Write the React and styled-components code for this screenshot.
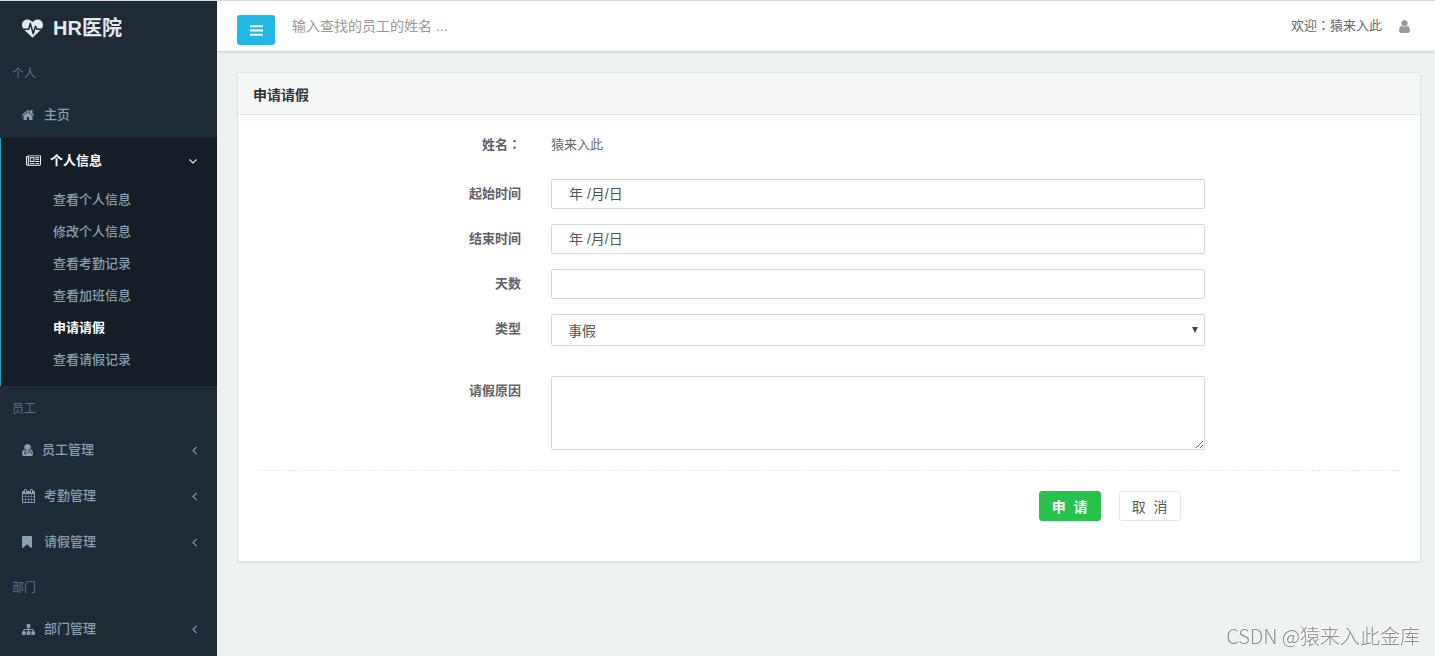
import { useState } from "react"
import styled, { createGlobalStyle, css } from "styled-components"

const GlobalStyle = createGlobalStyle`
    * {
        box-sizing: border-box;
    }
    body {
        margin: 0;
        background-color: #eef2f3;
        color: #686868;
        font-family: "Liberation Sans", "Noto Sans CJK SC", sans-serif;
        font-size: 13px;
        line-height: 20px;
    }
    input, select, textarea, button {
        font-family: inherit;
    }
`
const Layout = styled.div`
    display: flex;
    min-height: 100vh;
    border-top: 1px solid #d9dadd;
`
const Sidebar = styled.aside`
    flex: 0 0 217px;
    background-color: #1e2b35;
`
const Logo = styled.a`
    display: flex;
    align-items: center;
    gap: 10px;
    height: 50px;
    padding: 4px 22px 0;
    color: #e3e9f3;
    font-size: 20px;
    font-weight: 700;
    text-decoration: none;
`
const SectionTitle = styled.h5`
    height: 41px;
    margin: 0;
    padding: 13px 12px 0;
    color: #57748c;
    font-size: 12px;
    font-weight: 400;
`
const Menu = styled.ul`
    margin: 0;
    padding: 0;
    list-style: none;
`
const MenuItem = styled.li`
    ${({$open})=>$open&&css`
        padding-bottom: 10px;
        border-left: 1px solid #11a8cd;
        background-color: #151e26;
    `}
`
const MenuLink = styled.a`
    display: flex;
    align-items: center;
    height: 46px;
    padding: 0 20px 0 ${({$open})=>$open?'25px':'22px'};
    gap: 9px;
    color: ${({$open})=>$open?'#ffffff':'#87a0b4'};
    font-weight: ${({$open})=>$open?700:500};
    text-decoration: none;
    svg:last-child:not(:first-child) {
        margin-left: auto;
    }
`
const SubLink = styled.a`
    display: block;
    height: 32px;
    padding: 6px 0 6px 52px;
    color: ${({$active})=>$active?'#ffffff':'#87a0b4'};
    font-weight: ${({$active})=>$active?700:500};
    text-decoration: none;
`
const Page = styled.div`
    flex: 1;
    min-width: 0;
`
const TopBar = styled.header`
    display: flex;
    align-items: flex-start;
    height: 51px;
    padding: 14px 25px 0 20px;
    border-bottom: 1px solid #d0d2d3;
    background-color: #ffffff;
    box-shadow: 0 1px 2px rgba(0, 0, 0, 0.08);
`
const ToggleButton = styled.button`
    display: flex;
    align-items: center;
    justify-content: center;
    width: 38px;
    height: 30px;
    padding: 0;
    border: none;
    border-radius: 3px;
    background-color: #23b7e5;
    color: #ffffff;
    cursor: pointer;
`
const Search = styled.input`
    flex: 1;
    height: 22px;
    margin-left: 17px;
    padding: 0;
    border: none;
    outline: none;
    font-size: 14px;
    &::placeholder {
        color: #999999;
        opacity: 1;
    }
`
const Welcome = styled.div`
    display: flex;
    align-items: center;
    gap: 17px;
    height: 22px;
    svg {
        color: #999c9e;
    }
`
const Colon = styled.span`
    font-family: "Noto Sans CJK TC", sans-serif;
    line-height: 1;
`
const Panel = styled.section`
    margin: 20px 14px 0 20px;
    border: 1px solid #dee5e7;
    border-radius: 3px;
    background-color: #ffffff;
    box-shadow: 0 1px 2px rgba(0, 0, 0, 0.08);
`
const PanelTitle = styled.h1`
    margin: 0;
    padding: 12px 15px 9px;
    border-bottom: 1px solid #e3e9e9;
    background-color: #f6f8f8;
    color: #333333;
    font-size: 14px;
    font-weight: 700;
`
const Form = styled.form`
    padding: 20px 20px 40px;
`
const Row = styled.div`
    display: grid;
    grid-template-columns: 3fr 7fr 2fr;
    margin: 0 -15px ${({$gap})=>$gap??15}px;
`
const Label = styled.label`
    padding: 5px 15px 0 0;
    color: #606266;
    font-weight: 700;
    text-align: right;
`
const NameRow = styled(Row)`
    label {
        padding-top: 0;
    }
`
const Name = styled.output`
    padding: 0 15px;
`
const Field = styled.div`
    position: relative;
    padding: 0 15px;
`
const control = css`
    display: block;
    width: 100%;
    border: 1px solid #cfdadd;
    border-radius: 2px;
    outline: none;
    background-color: #ffffff;
    color: #555555;
    font-size: 14px;
`
const Input = styled.input`
    ${control}
    height: 30px;
    padding: 0 17px;
    &::placeholder {
        color: #555555;
        opacity: 1;
    }
`
const Select = styled.select`
    ${control}
    height: 32px;
    padding: 2px 16px 0;
    appearance: none;
`
const Caret = styled.svg`
    position: absolute;
    top: 13px;
    right: 22px;
    pointer-events: none;
`
const TextArea = styled.textarea`
    ${control}
    height: 74px;
    padding: 6px 16px;
    resize: vertical;
`
const Divider = styled.hr`
    margin: 20px 0;
    border: none;
    border-top: 1px dashed #e5e8e9;
`
const Actions = styled.div`
    display: flex;
    grid-column: 2;
    justify-content: flex-end;
    gap: 18px;
    padding-right: 39px;
`
const Button = styled.button`
    width: 62px;
    height: 30px;
    padding: 0;
    border: 1px solid ${({$primary})=>$primary?'#27c24c':'#e4e6e8'};
    border-radius: 3px;
    background-color: ${({$primary})=>$primary?'#27c24c':'#ffffff'};
    color: ${({$primary})=>$primary?'#ffffff':'#58595b'};
    font-size: 14px;
    font-weight: ${({$primary})=>$primary?700:400};
    white-space: pre;
    cursor: pointer;
`
const Watermark = styled.div`
    position: fixed;
    right: 15px;
    bottom: 5px;
    color: #8a8c8e;
    font-family: "Noto Sans CJK SC", sans-serif;
    font-size: 20px;
    font-weight: 300;
    line-height: 30px;
    text-shadow: -1px -1px 0 #ffffff;
    pointer-events: none;
`

const bar = "q0 26-19 45t-45 19h-1408q-26 0-45-19t-19-45v-128q0-26 19-45t45-19h1408q26 0 45 19t19 45z"
const icons = {
    heartbeat: {
        box: "0 0 1792 1792",
        width: 21,
        height: 21,
        d: "M1280 1024h305q-5 6-10 10.5t-9 7.5l-3 4-623 600q-18 18-44 18t-44-18l-624-602q-5-2-21-20h369q22 0 39.5-13.5t22.5-34.5l70-281 190 667q6 20 23 33t39 13q21 0 38-13t23-33l146-485 56 112q18 35 57 35zm512-428q0 145-103 300h-369l-111-221q-8-17-25.5-27t-36.5-8q-45 5-56 46l-129 430-196-686q-6-20-23.5-33t-39.5-13-39 13.5-22 34.5l-116 464h-423q-103-155-103-300 0-220 127-344t351-124q62 0 126.5 21.5t120 58 95.5 68.5 76 68q36-36 76-68t95.5-68.5 120-58 126.5-21.5q224 0 351 124t127 344z",
    },
    home: {
        box: "64 0 1664 1792",
        width: 13,
        height: 14,
        d: "M1408 992v480q0 26-19 45t-45 19h-384v-384h-256v384h-384q-26 0-45-19t-19-45v-480q0-1 .5-3t.5-3l575-474 575 474q1 2 1 6zm223-69l-62 74q-8 9-21 11h-3q-13 0-21-7l-692-577-692 577q-12 8-24 7-13-2-21-11l-62-74q-8-10-7-23.5t11-21.5l719-599q32-26 76-26t76 26l244 204v-195q0-14 9-23t23-9h192q14 0 23 9t9 23v408l219 182q10 8 11 21.5t-7 23.5z",
    },
    news: {
        box: "0 0 2048 1792",
        width: 15,
        height: 14,
        d: "M1024 512h-384v384h384v-384zm128 640v128h-640v-128h640zm0-768v640h-640v-640h640zm640 768v128h-512v-128h512zm0-256v128h-512v-128h512zm0-256v128h-512v-128h512zm0-256v128h-512v-128h512zm-1536 960v-960h-128v960q0 26 19 45t45 19 45-19 19-45zm1664 0v-1088h-1536v1088q0 33-11 64h1483q26 0 45-19t19-45zm128-1216v1216q0 80-56 136t-136 56h-1664q-80 0-136-56t-56-136v-1088h256v-128h1792z",
    },
    calendar: {
        box: "64 0 1664 1792",
        width: 13,
        height: 14,
        d: "M192 1664h288v-288h-288v288zm352 0h320v-288h-320v288zm-352-352h288v-320h-288v320zm352 0h320v-320h-320v320zm-352-384h288v-288h-288v288zm736 736h320v-288h-320v288zm-384-736h320v-288h-320v288zm768 736h288v-288h-288v288zm-384-352h320v-320h-320v320zm-352-864v-288q0-13-9.5-22.5t-22.5-9.5h-64q-13 0-22.5 9.5t-9.5 22.5v288q0 13 9.5 22.5t22.5 9.5h64q13 0 22.5-9.5t9.5-22.5zm736 864h288v-320h-288v320zm-384-384h320v-288h-320v288zm384 0h288v-288h-288v288zm32-480v-288q0-13-9.5-22.5t-22.5-9.5h-64q-13 0-22.5 9.5t-9.5 22.5v288q0 13 9.5 22.5t22.5 9.5h64q13 0 22.5-9.5t9.5-22.5zm384-64v1280q0 52-38 90t-90 38h-1408q-52 0-90-38t-38-90v-1280q0-52 38-90t90-38h128v-96q0-66 47-113t113-47h64q66 0 113 47t47 113v96h384v-96q0-66 47-113t113-47h64q66 0 113 47t47 113v96h128q52 0 90 38t38 90z",
    },
    bookmark: {
        box: "256 0 1664 1792",
        width: 13,
        height: 14,
        d: "M1420 128q23 0 44 9 33 13 52.5 41t19.5 62v1289q0 34-19.5 62t-52.5 41q-19 8-44 8-48 0-83-32l-441-424-441 424q-36 33-83 33-23 0-44-9-33-13-52.5-41t-19.5-62v-1289q0-34 19.5-62t52.5-41q21-9 44-9h1048z",
    },
    sitemap: {
        box: "0 0 1792 1792",
        width: 13,
        height: 13,
        d: "M1792 1248v320q0 40-28 68t-68 28h-320q-40 0-68-28t-28-68v-320q0-40 28-68t68-28h96v-192h-512v192h96q40 0 68 28t28 68v320q0 40-28 68t-68 28h-320q-40 0-68-28t-28-68v-320q0-40 28-68t68-28h96v-192h-512v192h96q40 0 68 28t28 68v320q0 40-28 68t-68 28h-320q-40 0-68-28t-28-68v-320q0-40 28-68t68-28h96v-192q0-52 38-90t90-38h512v-192h-96q-40 0-68-28t-28-68v-320q0-40 28-68t68-28h320q40 0 68 28t28 68v320q0 40-28 68t-68 28h-96v192h512q52 0 90 38t38 90v192h96q40 0 68 28t28 68z",
    },
    user: {
        box: "256 0 1280 1792",
        width: 11,
        height: 15,
        d: "M1536 1399q0 109-62.5 187t-150.5 78h-854q-88 0-150.5-78t-62.5-187q0-85 8.5-160.5t31.5-152 58.5-131 94-89 134.5-34.5q131 128 313 128t313-128q76 0 134.5 34.5t94 89 58.5 131 31.5 152 8.5 160.5zm-256-887q0 159-112.5 271.5t-271.5 112.5-271.5-112.5-112.5-271.5 112.5-271.5 271.5-112.5 271.5 112.5 112.5 271.5z",
    },
    bars: {
        box: "0 0 1792 1792",
        width: 15,
        height: 15,
        d: `M1664 1344v128${bar}M1664 832v128${bar}M1664 320v128${bar}`,
    },
    left: {
        box: "576 0 640 1792",
        width: 5,
        height: 14,
        d: "M1203 544q0 13-10 23l-393 393 393 393q10 10 10 23t-10 23l-50 50q-10 10-23 10t-23-10l-466-466q-10-10-10-23t10-23l466-466q10-10 23-10t23 10l50 50q10 10 10 23z",
    },
    down: {
        box: "384 0 1024 1792",
        width: 8,
        height: 14,
        d: "M1395 736q0 13-10 23l-466 466q-10 10-23 10t-23-10l-466-466q-10-10-10-23t10-23l50-50q10-10 23-10t23 10l393 393 393-393q10-10 23-10t23 10l50 50q10 10 10 23z",
    },
}

const Icon = ({name})=>{
    const {box,width,height,d} = icons[name]
    return(
        <svg width={width} height={height} viewBox={box} fill="currentColor" aria-hidden="true">
            <path d={d}/>
        </svg>
    )
}
// a person with a stethoscope hanging over the coat
const DoctorIcon = ()=>(
    <svg width="11" height="14" viewBox="0 0 1408 1792" fill="currentColor" aria-hidden="true">
        <path d={icons.user.d} transform="translate(-283 0) scale(1.1 1)"/>
        <g fill="none" stroke="#1e2b35" strokeWidth="90">
            <path d="M400 920v330M1000 920v180M780 1400v-130q0-160 220-160t220 160v130"/>
            <circle cx="400" cy="1340" r="100"/>
        </g>
    </svg>
)

const personalLinks = ['查看个人信息','修改个人信息','查看考勤记录','查看加班信息','申请请假','查看请假记录']

const MenuEntry = ({icon,label})=>(
    <MenuItem>
        <MenuLink href="#">
            {icon==='doctor'?<DoctorIcon/>:<Icon name={icon}/>}
            <span>{label}</span>
            <Icon name="left"/>
        </MenuLink>
    </MenuItem>
)

const SideMenu = ()=>{
    const [current,setCurrent] = useState('申请请假')
    return(
        <Sidebar>
            <Logo href="#">
                <Icon name="heartbeat"/>
                <span>HR医院</span>
            </Logo>
            <SectionTitle>个人</SectionTitle>
            <Menu>
                <MenuItem>
                    <MenuLink href="#">
                        <Icon name="home"/>
                        <span>主页</span>
                    </MenuLink>
                </MenuItem>
                <MenuItem $open>
                    <MenuLink href="#" $open>
                        <Icon name="news"/>
                        <span>个人信息</span>
                        <Icon name="down"/>
                    </MenuLink>
                    <Menu>
                        {personalLinks.map((item)=>(
                            <li key={item}>
                                <SubLink href="#" $active={item===current} onClick={()=>setCurrent(item)}>{item}</SubLink>
                            </li>
                        ))}
                    </Menu>
                </MenuItem>
            </Menu>
            <SectionTitle>员工</SectionTitle>
            <Menu>
                <MenuEntry icon="doctor" label="员工管理"/>
                <MenuEntry icon="calendar" label="考勤管理"/>
                <MenuEntry icon="bookmark" label="请假管理"/>
            </Menu>
            <SectionTitle>部门</SectionTitle>
            <Menu>
                <MenuEntry icon="sitemap" label="部门管理"/>
            </Menu>
        </Sidebar>
    )
}

const LeaveForm = ()=>(
    <Form onSubmit={(e)=>e.preventDefault()}>
        <NameRow $gap={24}>
            <Label htmlFor="name">姓名<Colon>：</Colon></Label>
            <Name id="name">猿来入此</Name>
        </NameRow>
        <Row>
            <Label htmlFor="start">起始时间</Label>
            <Field><Input id="start" placeholder="年 /月/日"/></Field>
        </Row>
        <Row>
            <Label htmlFor="end">结束时间</Label>
            <Field><Input id="end" placeholder="年 /月/日"/></Field>
        </Row>
        <Row>
            <Label htmlFor="days">天数</Label>
            <Field><Input id="days"/></Field>
        </Row>
        <Row $gap={30}>
            <Label htmlFor="type">类型</Label>
            <Field>
                <Select id="type">
                    <option>事假</option>
                    <option>病假</option>
                </Select>
                <Caret width="6" height="6" viewBox="0 0 6 6" fill="#444444" aria-hidden="true">
                    <path d="M0 0h6l-3 6z"/>
                </Caret>
            </Field>
        </Row>
        <Row $gap={20}>
            <Label htmlFor="reason">请假原因</Label>
            <Field><TextArea id="reason"/></Field>
        </Row>
        <Divider/>
        <Row $gap={0}>
            <Actions>
                <Button type="submit" $primary>申  请</Button>
                <Button type="reset">取  消</Button>
            </Actions>
        </Row>
    </Form>
)

const App = ()=>(
    <>
        <GlobalStyle/>
        <Layout>
            <SideMenu/>
            <Page>
                <TopBar>
                    <ToggleButton type="button" aria-label="菜单"><Icon name="bars"/></ToggleButton>
                    <Search aria-label="查找员工" placeholder="输入查找的员工的姓名 ..."/>
                    <Welcome>
                        <span>欢迎<Colon>：</Colon>猿来入此</span>
                        <Icon name="user"/>
                    </Welcome>
                </TopBar>
                <Panel>
                    <PanelTitle>申请请假</PanelTitle>
                    <LeaveForm/>
                </Panel>
            </Page>
        </Layout>
        <Watermark>CSDN @猿来入此金库</Watermark>
    </>
)

export default App
